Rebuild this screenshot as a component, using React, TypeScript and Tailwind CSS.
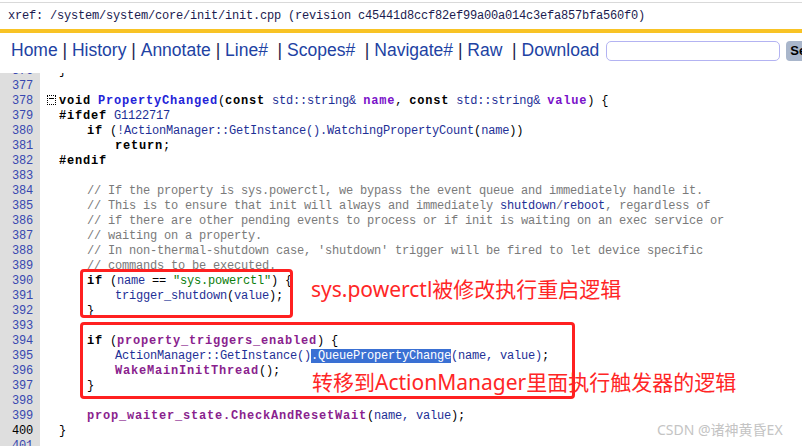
import React from 'react';

// segment styles for the code listing
const S = {
  n: 'text-black',
  k: 'font-bold text-black tracking-[0.8px]',
  f: 'font-bold text-[#2323d8] tracking-[0.8px]',
  v: 'font-bold text-[#7a12c9] tracking-[0.8px]',
  m: 'font-bold text-[#8a1f8e] tracking-[0.8px]',
  t: 'text-[#1e2f96]',
  c: 'text-[#7a7a7a]',
  s: 'text-[#0b7d0b]',
  h: 'bg-[#3a70d3] text-white',
};

type Seg = [keyof typeof S, string];
type Line = { no: number; segs: Seg[]; fold?: boolean; cur?: boolean };

const CODE: Line[] = [
  { no: 376, segs: [['n', '}']] },
  { no: 377, segs: [] },
  {
    no: 378,
    fold: true,
    segs: [
      ['k', 'void'], ['n', ' '], ['f', 'PropertyChanged'], ['n', '('], ['k', 'const'],
      ['t', ' std::string& '], ['v', 'name'], ['n', ', '], ['k', 'const'],
      ['t', ' std::string& '], ['v', 'value'], ['n', ') {'],
    ],
  },
  { no: 379, segs: [['k', '#ifdef'], ['t', ' G1122717']] },
  {
    no: 380,
    segs: [
      ['n', '    '], ['k', 'if'], ['n', ' ('], ['t', '!ActionManager::GetInstance().WatchingPropertyCount'],
      ['n', '('], ['t', 'name'], ['n', '))'],
    ],
  },
  { no: 381, segs: [['n', '        '], ['k', 'return'], ['n', ';']] },
  { no: 382, segs: [['k', '#endif']] },
  { no: 383, segs: [] },
  { no: 384, segs: [['c', '    // If the property is sys.powerctl, we bypass the event queue and immediately handle it.']] },
  {
    no: 385,
    segs: [
      ['c', '    // This is to ensure that init will always and immediately '], ['t', 'shutdown'],
      ['c', '/'], ['t', 'reboot'], ['c', ', regardless of'],
    ],
  },
  { no: 386, segs: [['c', '    // if there are other pending events to process or if init is waiting on an exec service or']] },
  { no: 387, segs: [['c', '    // waiting on a property.']] },
  { no: 388, segs: [['c', "    // In non-thermal-shutdown case, 'shutdown' trigger will be fired to let device specific"]] },
  { no: 389, segs: [['c', '    // commands to be executed.']] },
  {
    no: 390,
    segs: [
      ['n', '    '], ['k', 'if'], ['n', ' ('], ['t', 'name'], ['n', ' == '], ['s', '"sys.powerctl"'], ['n', ') {'],
    ],
  },
  { no: 391, segs: [['t', '        trigger_shutdown'], ['n', '('], ['t', 'value'], ['n', ');']] },
  { no: 392, segs: [['n', '    }']] },
  { no: 393, segs: [] },
  {
    no: 394,
    segs: [['n', '    '], ['k', 'if'], ['n', ' ('], ['m', 'property_triggers_enabled'], ['n', ') {']],
  },
  {
    no: 395,
    segs: [['t', '        ActionManager::GetInstance()'], ['h', '.QueuePropertyChange'], ['t', '(name, value)'], ['n', ';']],
  },
  { no: 396, segs: [['n', '        '], ['m', 'WakeMainInitThread'], ['n', '();']] },
  { no: 397, segs: [['n', '    }']] },
  { no: 398, segs: [] },
  {
    no: 399,
    segs: [['n', '    '], ['m', 'prop_waiter_state.CheckAndResetWait'], ['n', '('], ['t', 'name, value'], ['n', ');']],
  },
  { no: 400, cur: true, segs: [['n', '}']] },
  { no: 401, segs: [] },
];

const NAV = ['Home', 'History', 'Annotate', 'Line#', 'Scopes#', 'Navigate#', 'Raw', 'Download'];
const WIDE_GAP = ['Line#', 'Scopes#', 'Raw'];

function Nav() {
  return (
    <div className="h-[40px] pb-[5px] flex items-center pl-[11px] font-['Liberation_Sans',Arial,sans-serif] text-[17.5px] whitespace-pre">
      {NAV.map((item, i) => (
        <React.Fragment key={item}>
          <span className="text-[#2142a3] shrink-0">{item}</span>
          {i < NAV.length - 1 && (
            <span className="text-[#262650] shrink-0">{WIDE_GAP.includes(item) ? '  | ' : ' | '}</span>
          )}
        </React.Fragment>
      ))}
      <input
        type="text"
        className="ml-[7px] shrink-0 w-[174px] h-[20px] border border-[#b3b3f2] rounded-[5px] bg-white outline-none"
      />
      <button className="ml-[6px] shrink-0 h-[20px] px-[4px] bg-[#a9b6cb] rounded-[4px] text-[13px] font-bold text-black leading-[20px]">
        Search
      </button>
    </div>
  );
}

function CodeLine({ line }: { line: Line }) {
  return (
    <div className="flex h-[15px] leading-[15px]">
      <div
        className={`w-[40px] shrink-0 bg-[#dedede] text-right pr-[7px] ${line.cur ? 'text-black' : 'text-[#3848b0]'}`}
      >
        {line.no}
      </div>
      <div className="w-[19px] shrink-0">
        {line.fold && (
          <div className="ml-[7px] mt-[1px] w-[9px] h-[10px] border border-dotted border-black flex items-start justify-center pt-[2px]">
            <span className="w-[5px] h-px bg-black" />
          </div>
        )}
      </div>
      <div className="whitespace-pre">
        {line.segs.map(([cls, text], i) => (
          <span key={i} className={S[cls]}>
            {text}
          </span>
        ))}
      </div>
    </div>
  );
}

export default function App() {
  return (
    <div className="relative w-[802px] h-[446px] overflow-hidden bg-white">
      <div className="h-[2px]" />
      <div className="h-px bg-[#d9d9d9]" />
      <div className="h-[26px] flex items-center pl-[8px] font-['Liberation_Mono',monospace] text-[12px] tracking-[-0.2px] text-[#1b1b4f] whitespace-pre">
        xref: /system/system/core/init/init.cpp (revision c45441d8ccf82ef99a00a014c3efa857bfa560f0)
      </div>
      <div className="h-[4px] bg-[#f8c325]" />
      <Nav />

      <div className="h-[373px] overflow-hidden font-['Liberation_Mono',monospace] text-[12px] tracking-[-0.2px]">
        <div className="-mt-[9px]">
          {CODE.map((line) => (
            <CodeLine key={line.no} line={line} />
          ))}
        </div>
      </div>

      {/* 标注 */}
      <div className="absolute left-[80px] top-[269px] w-[213px] h-[49px] border-[3px] border-[#ff2020] rounded-[4px]" />
      <div className="absolute left-[80px] top-[322px] w-[495px] h-[77px] border-[3px] border-[#ff2020] rounded-[4px]" />
      <div className="absolute left-[311px] top-[279px] text-[21px] leading-[21px] text-[#ff2626] whitespace-nowrap font-['Noto_Sans','Noto_Sans_CJK_SC',sans-serif]">
        sys.powerctl被修改执行重启逻辑
      </div>
      <div className="absolute left-[312px] top-[372px] text-[21px] leading-[21px] text-[#ff2626] whitespace-nowrap font-['Noto_Sans','Noto_Sans_CJK_SC',sans-serif]">
        转移到ActionManager里面执行触发器的逻辑
      </div>
      <div className="absolute left-[657px] top-[421px] text-[14px] leading-[18px] text-[#c4c4c4] whitespace-nowrap font-['Noto_Sans','Noto_Sans_CJK_SC',sans-serif]">
        CSDN @诸神黄昏EX
      </div>
    </div>
  );
}
